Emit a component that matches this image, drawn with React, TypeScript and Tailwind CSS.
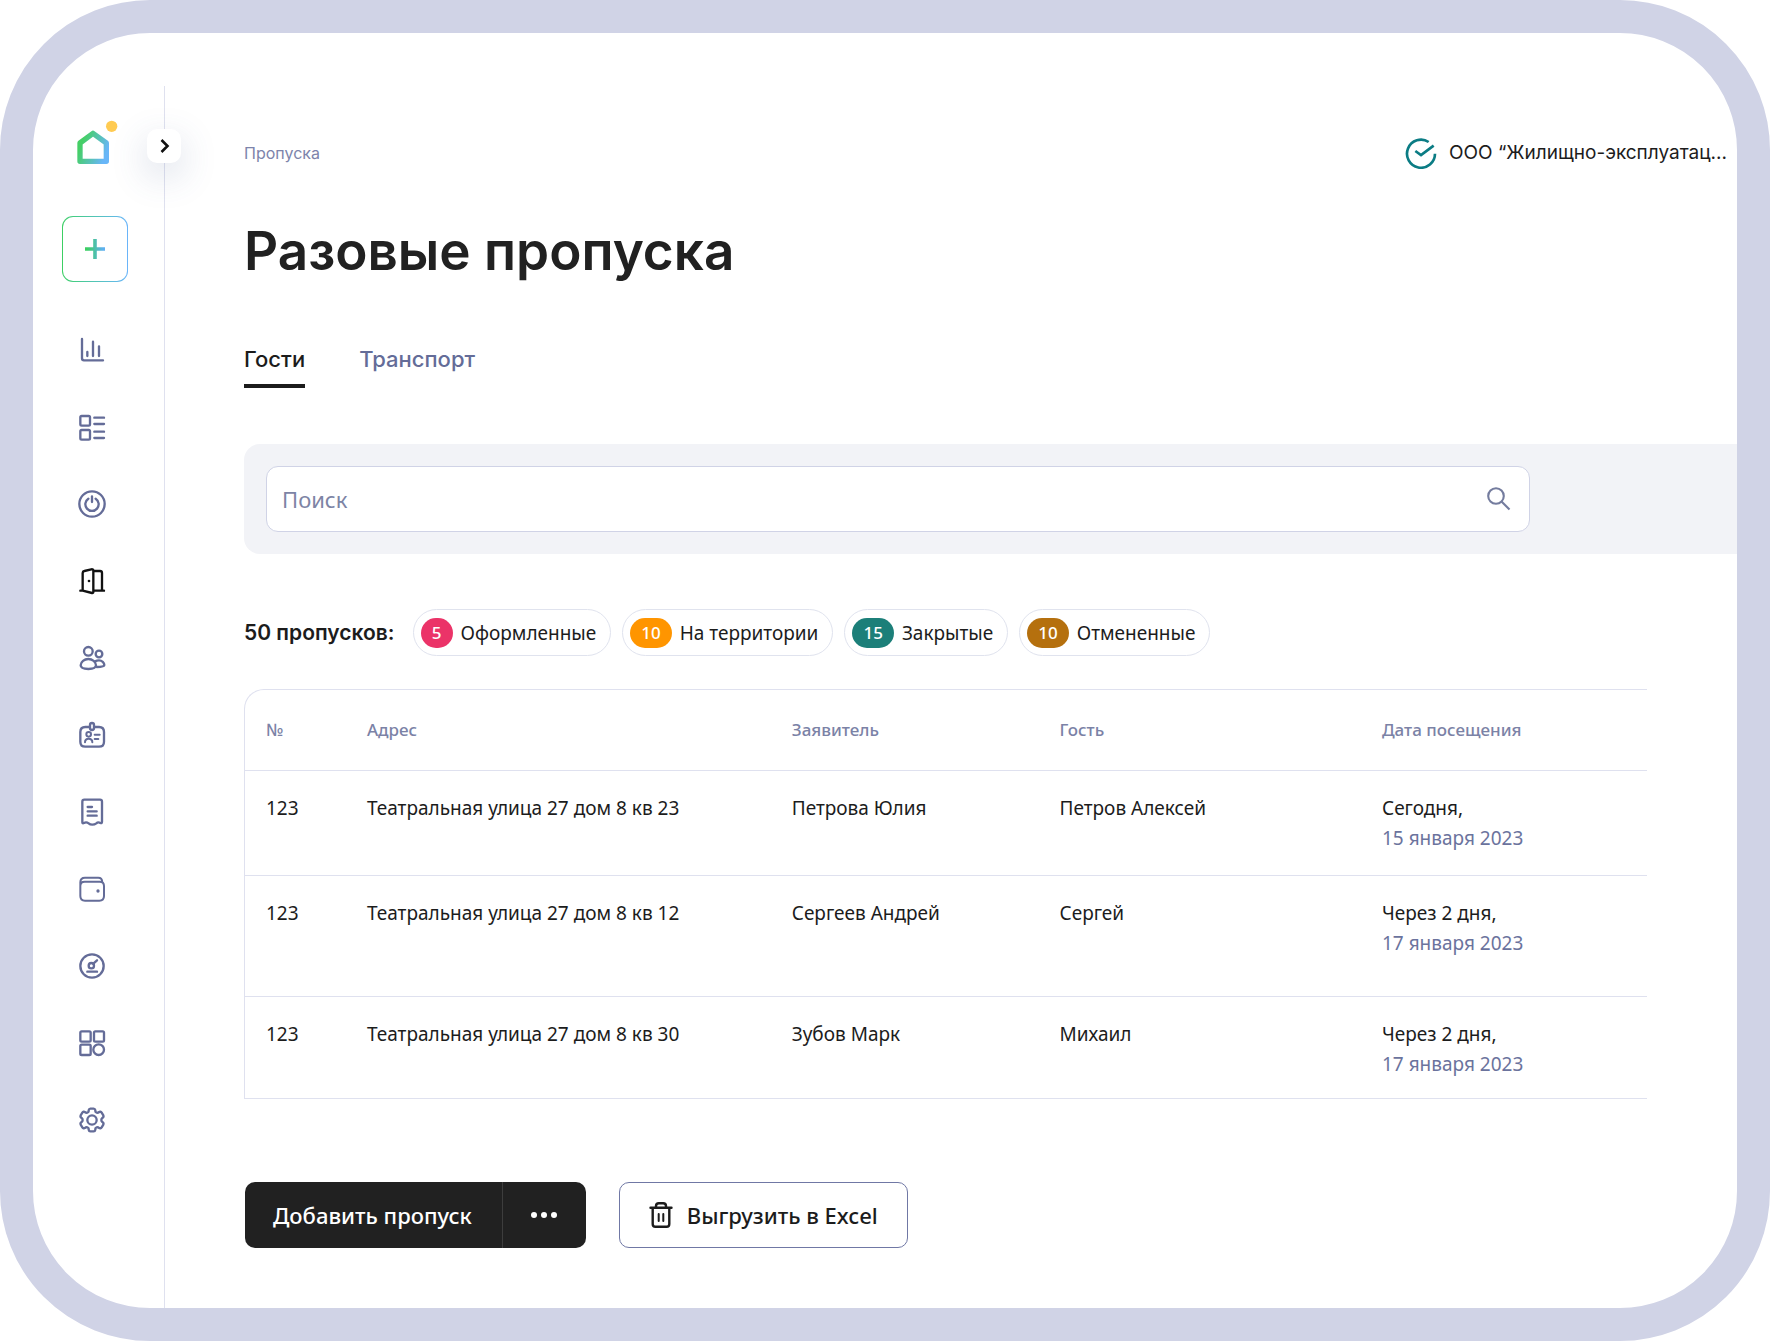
import type { ReactNode } from 'react'

function Glyph({ children }: { children: ReactNode }) {
  return (
    <svg
      viewBox="0 0 84 84"
      className="size-7"
      fill="none"
      stroke="currentColor"
      strokeWidth="7"
      strokeLinecap="round"
      strokeLinejoin="round"
      aria-hidden="true"
    >
      {children}
    </svg>
  )
}

const navItems: { label: string; active?: boolean; icon: ReactNode }[] = [
  {
    label: 'Статистика',
    icon: (
      <Glyph>
        <path d="M12 9v58q0 6 6 6h57M28 48v12M45 17v43M63 31v29" />
      </Glyph>
    ),
  },
  {
    label: 'Списки',
    icon: (
      <Glyph>
        <rect x="7" y="9" width="29" height="29" rx="4" />
        <rect x="7" y="51" width="29" height="29" rx="4" />
        <path d="M49 14h29M49 33h29M49 56h29M49 75h29" />
      </Glyph>
    ),
  },
  {
    label: 'Управление',
    icon: (
      <Glyph>
        <circle cx="42" cy="42" r="38" />
        <path d="M42 19v17M31 26a20 20 0 1 0 22 0" />
      </Glyph>
    ),
  },
  {
    label: 'Пропуска',
    active: true,
    icon: (
      <Glyph>
        <path d="M14 70V18q0-5 5-6l21-5q6-1 6 4v64q0 4-4 3l-28-7M46 12h20q6 0 6 6v53M7 71h7M46 71h32" />
        <circle cx="33" cy="42" r="4" fill="currentColor" stroke="none" />
      </Glyph>
    ),
  },
  {
    label: 'Жители',
    icon: (
      <Glyph>
        <circle cx="31" cy="22" r="13" />
        <circle cx="63" cy="30" r="10" />
        <path d="M8 64c0-11 11-19 23-19s23 8 23 19c0 8-8 11-23 11S8 72 8 64z" />
        <path d="M51 52c4-2 8-3 12-3 9 0 16 8 16 14 0 5-8 6-23 6" />
      </Glyph>
    ),
  },
  {
    label: 'Сотрудники',
    icon: (
      <Glyph>
        <path d="M35 18H22Q7 18 7 33v29q0 15 15 15h41q15 0 15-15V33q0-15-15-15H49" />
        <rect x="36" y="6" width="12" height="21" rx="6" />
        <g strokeWidth="6">
          <circle cx="32" cy="40" r="7" />
          <path d="M21 64c0-14 22-14 22 0M50 41h15M50 54h11" />
        </g>
      </Glyph>
    ),
  },
  {
    label: 'Квитанции',
    icon: (
      <Glyph>
        <path d="M13 71V11q0-6 6-6h47q6 0 6 6v60q0 6-5 4c-6-4-9-2-12 1-4 3-8 4-12 4s-8-1-11-4c-4-3-8-5-14-1-5 2-5-1-5-4z" />
        <path d="M29 27h13M29 40h27M29 53h27" />
      </Glyph>
    ),
  },
  {
    label: 'Платежи',
    icon: (
      <Glyph>
        <path strokeWidth="6" d="M7 33V22Q7 8 21 8h40q11 0 12 13M7 33q0-13 13-13h45q13 0 13 13v30q0 14-14 14H21Q7 77 7 63z" />
        <circle cx="60" cy="48" r="5" fill="currentColor" stroke="none" />
      </Glyph>
    ),
  },
  {
    label: 'Счётчики',
    icon: (
      <Glyph>
        <circle cx="42" cy="42" r="35" />
        <circle cx="40" cy="41" r="8" />
        <path d="M46 35l11-10M28 59h29" />
      </Glyph>
    ),
  },
  {
    label: 'Сервисы',
    icon: (
      <Glyph>
        <rect x="7" y="7" width="31" height="31" rx="4" />
        <rect x="48" y="7" width="30" height="31" rx="4" />
        <rect x="7" y="47" width="31" height="31" rx="4" />
        <circle cx="62" cy="62" r="16" />
      </Glyph>
    ),
  },
  {
    label: 'Настройки',
    icon: (
      <Glyph>
        <path d="M32 13Q33 8 37 8h10q4 0 5 5v3q0 3 4 4t6-1q6-4 9 1l5 8q2 5-3 8-3 2-3 6t3 6q5 3 3 8l-5 8q-3 5-9 1-2-2-6-1t-4 4v3q-1 5-5 5H37q-4 0-5-5v-3q0-3-4-4t-6 1q-6 4-9-1l-5-8q-2-5 3-8 3-2 3-6t-3-6q-5-3-3-8l5-8q3-5 9-1 2 2 6 1t4-4z" />
        <circle cx="42" cy="42" r="14" />
      </Glyph>
    ),
  },
]

const statuses = [
  { count: 5, label: 'Оформленные', color: 'bg-[#eb3368]' },
  { count: 10, label: 'На территории', color: 'bg-[#ff9500]' },
  { count: 15, label: 'Закрытые', color: 'bg-[#1c7f79]' },
  { count: 10, label: 'Отмененные', color: 'bg-[#b5700e]' },
]

const columns = [
  { title: '№', width: 'w-[7.2%]' },
  { title: 'Адрес', width: 'w-[30.3%]' },
  { title: 'Заявитель', width: 'w-[19.1%]' },
  { title: 'Гость', width: 'w-[23%]' },
  { title: 'Дата посещения', width: 'w-[20.4%]' },
]

const passes = [
  { address: 'Театральная улица 27 дом 8 кв 23', applicant: 'Петрова Юлия', guest: 'Петров Алексей', day: 'Сегодня,', date: '15 января 2023', height: 'h-[105px]' },
  { address: 'Театральная улица 27 дом 8 кв 12', applicant: 'Сергеев Андрей', guest: 'Сергей', day: 'Через 2 дня,', date: '17 января 2023', height: 'h-[121px]' },
  { address: 'Театральная улица 27 дом 8 кв 30', applicant: 'Зубов Марк', guest: 'Михаил', day: 'Через 2 дня,', date: '17 января 2023', height: 'h-[102px]' },
]

function Sidebar() {
  return (
    <aside className="relative mt-[53px] flex w-[132px] shrink-0 flex-col items-start border-r border-[#dfe1ef] pt-8">
      <a href="#home" aria-label="Главная" className="ml-[42px]">
        <svg viewBox="225 355 135 144" className="h-12 w-[45px]" aria-hidden="true">
          <defs>
            <linearGradient id="brand" x1="235" y1="430" x2="322" y2="465" gradientUnits="userSpaceOnUse">
              <stop offset="0.1" stopColor="#45cf66" />
              <stop offset="0.95" stopColor="#68b6f8" />
            </linearGradient>
          </defs>
          <path d="M240 430L279 401l40 29v55h-79z" fill="none" stroke="url(#brand)" strokeWidth="16" strokeLinejoin="round" />
          <circle cx="335" cy="380" r="17" fill="#ffcb52" />
        </svg>
      </a>

      <button
        type="button"
        aria-label="Развернуть меню"
        className="absolute top-[43px] -right-[17px] flex size-[34px] items-center justify-center rounded-[10px] bg-white shadow-[0_12px_36px_rgba(70,90,140,0.22)]"
      >
        <svg viewBox="0 0 34 34" className="size-[34px]" fill="none" stroke="#111" strokeWidth="2.6" aria-hidden="true">
          <path d="M14.500 11l6 6-6 6" />
        </svg>
      </button>

      <button
        type="button"
        aria-label="Создать"
        className="mt-[50px] ml-[29px] flex size-[66px] rounded-[11px] bg-linear-to-r from-[#3ccf62] to-[#6ab4fa] p-px"
      >
        <span className="flex flex-1 items-center justify-center rounded-[10px] bg-white">
          <svg viewBox="0 0 20 20" className="size-5" aria-hidden="true">
            <defs>
              <linearGradient id="plus" x1="0" y1="0" x2="20" y2="0" gradientUnits="userSpaceOnUse">
                <stop offset="0.1" stopColor="#3ccf62" />
                <stop offset="0.9" stopColor="#5fb0f0" />
              </linearGradient>
            </defs>
            <path d="M8.200 0h3.600v8.200H20v3.600h-8.200V20H8.200v-8.200H0V8.200h8.200z" fill="url(#plus)" />
          </svg>
        </span>
      </button>

      <nav aria-label="Разделы" className="mt-[54px] ml-[45px] flex flex-col gap-[49px]">
        {navItems.map((item) => (
          <a
            key={item.label}
            href="#section"
            aria-label={item.label}
            aria-current={item.active ? 'page' : undefined}
            className={item.active ? 'block text-[#111111]' : 'block text-[#646c98]'}
          >
            {item.icon}
          </a>
        ))}
      </nav>
    </aside>
  )
}

export default function App() {
  return (
    <div className="flex min-h-screen overflow-hidden rounded-[150px] border-[33px] border-[#d0d3e6] bg-white font-['Noto_Sans',sans-serif] text-[19px] leading-[30px] text-[#1c1c1c]">
      <Sidebar />

      <main className="flex min-w-0 flex-1 flex-col pt-[104px] pb-[60px] pl-[79px]">
        <header className="flex h-8 items-center justify-between pr-[10px] font-['Inter',sans-serif]">
          <a href="#passes" className="text-base text-[#7d84ab]">
            Пропуска
          </a>
          <button type="button" className="flex items-center gap-3">
            <svg viewBox="0 0 96 96" className="size-8" fill="none" stroke="#0b7c84" strokeWidth="8" aria-hidden="true">
              <path d="M71 15A42 42 0 1 0 90 50" />
              <path d="M31 42l17 12 38-28" />
            </svg>
            <span>ООО “Жилищно-эксплуатац...</span>
          </button>
        </header>

        <h1 className="mt-[52px] font-['Inter',sans-serif] text-[53px] leading-[60px] font-semibold text-[#212121]">
          Разовые пропуска
        </h1>

        <div role="tablist" className="mt-[62px] flex items-start gap-[54px] font-['Inter',sans-serif] text-[22px] leading-8 font-medium">
          <button type="button" role="tab" aria-selected="true" className="border-b-4 border-[#1c1c1c] pb-[9px]">
            Гости
          </button>
          <button type="button" role="tab" aria-selected="false" className="text-[#646c98]">
            Транспорт
          </button>
        </div>

        <div className="mt-14 rounded-l-2xl bg-[#f2f3f7] py-[22px] pr-[207px] pl-[22px]">
          <label className="flex h-[66px] items-center rounded-xl border border-[#d0d3e6] bg-white pr-[18px] pl-[15px]">
            <input
              type="search"
              placeholder="Поиск"
              aria-label="Поиск"
              className="min-w-0 flex-1 bg-transparent text-[22px] outline-none placeholder:text-[#7d84a5]"
            />
            <svg viewBox="0 0 24 24" className="size-6" fill="none" stroke="#747c9e" strokeWidth="2.1" aria-hidden="true">
              <circle cx="9" cy="9" r="7.8" />
              <path d="M14.500 14.500l8 8" />
            </svg>
          </label>
        </div>

        <div className="mt-[55px] flex items-center gap-[18px]">
          <h2 className="font-['Inter',sans-serif] text-[21px] font-semibold">50 пропусков:</h2>
          <ul className="flex gap-[11px]">
            {statuses.map((status) => (
              <li key={status.label}>
                <button type="button" className="flex h-[47px] items-center gap-2 rounded-full border border-[#e0e3ee] pr-[14px] pl-[7px]">
                  <span className={`flex h-[30px] min-w-8 items-center justify-center rounded-full px-[11px] text-[17px] font-medium text-white ${status.color}`}>
                    {status.count}
                  </span>
                  {status.label}
                </button>
              </li>
            ))}
          </ul>
        </div>

        <div className="mt-[33px] mr-[90px] overflow-hidden rounded-tl-[20px] border-t border-l border-[#dfe1ef]">
          <table className="w-full table-fixed border-separate border-spacing-0 text-left">
            <thead>
              <tr>
                {columns.map((column) => (
                  <th key={column.title} scope="col" className={`h-[81px] border-b border-[#dfe1ef] pl-[21px] text-[17px] font-medium text-[#7b82a6] ${column.width}`}>
                    {column.title}
                  </th>
                ))}
              </tr>
            </thead>
            <tbody className="align-top [&_td]:border-b [&_td]:border-[#dfe1ef] [&_td]:pt-[22px] [&_td]:pl-[21px]">
              {passes.map((pass) => (
                <tr key={pass.address} className={pass.height}>
                  <td>123</td>
                  <td>{pass.address}</td>
                  <td>{pass.applicant}</td>
                  <td>{pass.guest}</td>
                  <td>
                    {pass.day}
                    <span className="block text-[#6b739d]">{pass.date}</span>
                  </td>
                </tr>
              ))}
            </tbody>
          </table>
        </div>

        <div className="mt-[83px] flex gap-[33px] pl-px text-[22px] font-medium">
          <div className="flex h-[66px] overflow-hidden rounded-[10px] bg-[#212121] text-white">
            <button type="button" className="border-r border-[#3d3d3d] pr-[30px] pl-7">
              Добавить пропуск
            </button>
            <button type="button" aria-label="Ещё" className="flex w-[83px] items-center justify-center gap-1">
              <span className="size-[6px] rounded-full bg-white" />
              <span className="size-[6px] rounded-full bg-white" />
              <span className="size-[6px] rounded-full bg-white" />
            </button>
          </div>
          <button type="button" className="flex h-[66px] items-center gap-[14px] rounded-[10px] border border-[#7078a5] px-[29px]">
            <svg viewBox="0 0 24 26" className="h-[26px] w-6" fill="none" stroke="currentColor" strokeWidth="2.4" strokeLinecap="round" strokeLinejoin="round" aria-hidden="true">
              <path d="M1.500 5.700h21M3.700 6v16q0 2.700 2.700 2.700h11.200q2.700 0 2.700-2.700V6M7 5.500V4q0-2.800 2.800-2.800h4.400Q17 1.200 17 4v1.500" />
              <path d="M9.700 12v7M14.300 12v7" strokeWidth="2" />
            </svg>
            Выгрузить в Excel
          </button>
        </div>
      </main>
    </div>
  )
}
